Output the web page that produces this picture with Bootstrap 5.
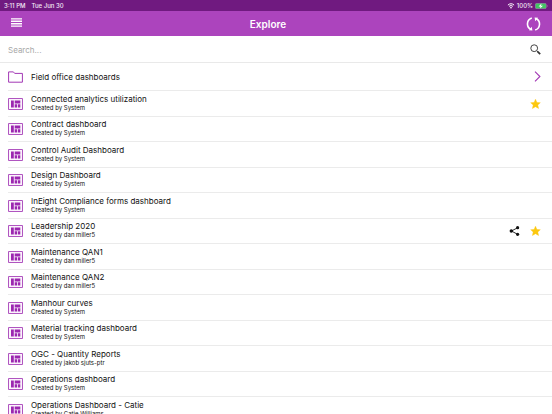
<!DOCTYPE html>
<html lang="en">
<head>
<meta charset="utf-8">
<meta name="viewport" content="width=device-width, initial-scale=1">
<title>Explore</title>
<link rel="stylesheet" href="https://cdn.jsdelivr.net/npm/bootstrap@5.3.0/dist/css/bootstrap.min.css">
<style>
body { font-family: Inter, "Liberation Sans", sans-serif; color: #111; font-size: 8px; line-height: 10px; background: #fff; overflow: hidden; }
.status-bar { height: 11px; background: #701a80; color: #f6ecf8; font-size: 6px; line-height: 11px; padding: 0 4px; font-weight: 500; }
.status-group { gap: 6px; }
.status-icons { gap: 2px; }
.title-bar { height: 25px; background: #ac44bd; color: #fff; padding: 0 11px; display: grid; grid-template-columns: 1fr auto 1fr; }
.title-bar h1 { font-size: 10px; line-height: 12px; font-weight: 600; padding-right: 16px; }
.plain-btn { border: 0; background: none; padding: 0; line-height: 0; color: inherit; }
.search-bar { height: 27px; padding: 0 11px 0 8px; border-bottom: 1px solid #e9e9e9; }
.search-bar input { border: 0; outline: 0; padding: 2px 0 0; font-size: 8px; line-height: 12px; color: #333; background: none; }
.search-bar input::placeholder { color: #a8a8a8; opacity: 1; }
.folder-row { height: 28px; }
.boards { display: grid; grid-auto-rows: 26px 25px; }
.entry { margin-left: 8px; padding-right: 11px; border-bottom: 1px solid #ebebeb; gap: 8px; }
.entry a { color: inherit; text-decoration: none; }
.boards a { padding-bottom: 3px; }
.entry-name { font-size: 8px; line-height: 10px; }
.entry-owner { font-size: 6px; line-height: 7px; }
.tools { gap: 10px; }
.violet { color: #a338b5; }
</style>
<script src="https://cdn.jsdelivr.net/npm/bootstrap@5.3.0/dist/js/bootstrap.bundle.min.js"></script>
</head>
<body>
<svg class="d-none" aria-hidden="true">
  <symbol id="board" viewBox="0 0 15 12"><path d="M.5.5h14v11H.5z" fill="#fbf3fc" stroke="#b055c0"/><path d="M3 2.6h2.8v6.8H3zM6.7 2.6h5.6v2.8H6.7zM6.7 6.3h2.5v3.1H6.7zM10 6.3h2.3v3.1H10z" fill="#9c27b0"/></symbol>
  <symbol id="star" viewBox="0 0 10 10"><path d="M5 .2 6.4 3.4 9.8 3.7 7.3 6.1 8.1 9.5 5 7.7 1.9 9.5 2.7 6.1.2 3.7 3.6 3.4z" fill="#fcc80e" stroke="#fcc80e" stroke-width=".4"/></symbol>
  <symbol id="share" viewBox="0 0 10 10"><path d="M8 1.8 2 5l6 3.3" fill="none" stroke="#111" stroke-width=".9"/><g fill="#111"><circle cx="8.1" cy="1.7" r="1.6"/><circle cx="1.8" cy="5" r="1.7"/><circle cx="8.1" cy="8.3" r="1.6"/></g></symbol>
</svg>
<div class="status-bar d-flex justify-content-between">
  <div class="status-group d-flex"><span>3:11 PM</span><span>Tue Jun 30</span></div>
  <div class="status-icons d-flex align-items-center">
    <svg width="8" height="6" viewBox="0 0 7 6" fill="none" stroke="#fff"><path d="M.4 2.1C2.2.3 4.8.3 6.6 2.1M1.6 3.4c1.1-1 2.7-1 3.8 0" stroke-width="1"/><path d="M2.4 4.4q1.1-.7 2.2 0L3.5 5.7z" fill="#fff" stroke="none"/></svg>
    <span>100%</span>
    <svg width="13" height="6" viewBox="0 0 13 6"><rect x=".3" y=".3" width="10.9" height="5.4" rx="1.5" fill="#42c563" stroke="#a982b2" stroke-width=".6"/><path d="M12 2v2q1-1 0-2z" fill="#c9a9cf"/><path d="M6.5.5 3.6 3.4h1.9L5 5.6 8 2.7H6z" fill="#fff"/></svg>
  </div>
</div>
<header class="title-bar align-items-center">
  <button class="plain-btn text-start" type="button" aria-label="Menu"><svg width="11" height="11" viewBox="0 0 11 11"><path d="M0 .9h11M0 3.3h11M0 5.7h11M0 8.1h11" stroke="#fff" stroke-width="1.4"/></svg></button>
  <h1 class="m-0">Explore</h1>
  <button class="plain-btn text-end" type="button" aria-label="Refresh"><svg width="15" height="16" viewBox="0 0 15 16" fill="none" stroke="#fff" stroke-width="1.6"><path d="M5.8 2A6.2 6.2 0 0 0 4.6 13.3M9.2 14A6.2 6.2 0 0 0 10.4 2.7"/><path d="M2.9 14.2 6.4 14.4 5.8 10.8zM12.1 1.8 8.6 1.6 9.2 5.2z" fill="#fff" stroke="none"/></svg></button>
</header>
<form class="search-bar d-flex align-items-center" role="search" onsubmit="return false">
  <input class="flex-grow-1" type="text" placeholder="Search..." aria-label="Search">
  <button class="plain-btn" type="submit" aria-label="Search"><svg width="11" height="11" viewBox="0 0 11 11" fill="none" stroke="#444"><circle cx="4.2" cy="4.2" r="3.4"/><path d="m6.8 6.8 1.2 1.2"/><path d="m7.6 7.6 2.6 2.5" stroke-width="1.7" stroke="#333"/></svg></button>
</form>
<main>
  <div class="entry folder-row d-flex align-items-center">
    <svg class="violet" width="15" height="12" viewBox="0 0 15 12"><path d="M.6 11.2V.9h4.8l1.3 1.5h7.7v8.8z" fill="none" stroke="currentColor" stroke-width="1"/></svg>
    <a class="entry-name flex-grow-1" href="#">Field office dashboards</a>
    <svg class="violet" width="7" height="11" viewBox="0 0 7 11"><path d="m1 .6 4.9 4.9L1 10.4" fill="none" stroke="currentColor" stroke-width="1.1"/></svg>
  </div>
  <div class="boards" id="boards"></div>
</main>
<script>
const boards = [
  ["Connected analytics utilization", "System", "star"],
  ["Contract dashboard", "System"],
  ["Control Audit Dashboard", "System"],
  ["Design Dashboard", "System"],
  ["InEight Compliance forms dashboard", "System"],
  ["Leadership 2020", "dan miller5", "share", "star"],
  ["Maintenance QAN1", "dan miller5"],
  ["Maintenance QAN2", "dan miller5"],
  ["Manhour curves", "System"],
  ["Material tracking dashboard", "System"],
  ["OGC - Quantity Reports", "jakob sjuts-ptr"],
  ["Operations dashboard", "System"],
  ["Operations Dashboard - Catie", "Catie Williams"]
];
document.getElementById("boards").innerHTML = boards.map(([name, owner, ...tools]) => `
  <div class="entry d-flex align-items-center">
    <svg width="15" height="12"><use href="#board"/></svg>
    <a class="flex-grow-1" href="#"><div class="entry-name">${name}</div><div class="entry-owner">Created by ${owner}</div></a>
    <div class="tools d-flex">${tools.map(t => `<button class="plain-btn" type="button" aria-label="${t}"><svg width="11" height="10"><use href="#${t}"/></svg></button>`).join("")}</div>
  </div>`).join("");
</script>
</body>
</html>
